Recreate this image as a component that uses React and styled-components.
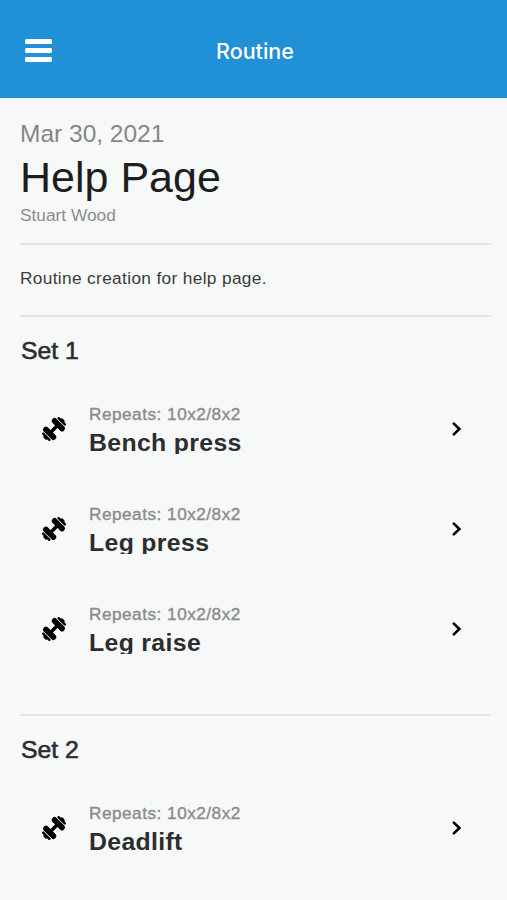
import React from 'react';
import styled, { createGlobalStyle } from 'styled-components';

const routine = {
  date: 'Mar 30, 2021',
  name: 'Help Page',
  author: 'Stuart Wood',
  description: 'Routine creation for help page.',
  sets: [
    {
      title: 'Set 1',
      exercises: [
        { name: 'Bench press', repeats: '10x2/8x2' },
        { name: 'Leg press', repeats: '10x2/8x2' },
        { name: 'Leg raise', repeats: '10x2/8x2' },
      ],
    },
    {
      title: 'Set 2',
      exercises: [{ name: 'Deadlift', repeats: '10x2/8x2' }],
    },
  ],
};

const DumbbellIcon = () => (
  <svg width='26' height='26' viewBox='-13.5 -13.5 27 27'>
    <g transform='rotate(-45)'>
      <rect x='-5' y='-1.8' width='10' height='3.6' />
      <rect x='-9.3' y='-8.4' width='5.9' height='16.8' rx='2.6' />
      <rect x='3.4' y='-8.4' width='5.9' height='16.8' rx='2.6' />
      <rect x='-12.6' y='-5.8' width='2.5' height='11.6' rx='1.2' />
      <rect x='10.1' y='-5.8' width='2.5' height='11.6' rx='1.2' />
      <rect x='-14' y='-2.4' width='2.6' height='4.8' rx='1' />
      <rect x='11.4' y='-2.4' width='2.6' height='4.8' rx='1' />
    </g>
  </svg>
);

const ChevronIcon = () => (
  <svg width='12' height='16' viewBox='0 0 12 16'>
    <path
      d='M2.8 2.6 L8.4 8 L2.8 13.4'
      fill='none'
      stroke='#000'
      strokeWidth='2.6'
      strokeLinecap='round'
    />
  </svg>
);

export default function App() {
  return (
    <>
      <GlobalStyle />
      <Screen>
        <Header>
          <MenuButton aria-label='Menu'>
            <span />
            <span />
            <span />
          </MenuButton>
          <HeaderTitle>Routine</HeaderTitle>
        </Header>

        <Content>
          <Intro>
            <RoutineDate>{routine.date}</RoutineDate>
            <RoutineName>{routine.name}</RoutineName>
            <Author>{routine.author}</Author>
          </Intro>
          <Description>{routine.description}</Description>

          {routine.sets.map(({ title, exercises }) => (
            <SetSection key={title}>
              <SetTitle>{title}</SetTitle>
              {exercises.map(({ name, repeats }) => (
                <ExerciseRow key={name}>
                  <DumbbellIcon />
                  <ExerciseInfo>
                    <Repeats>Repeats: {repeats}</Repeats>
                    <ExerciseName>{name}</ExerciseName>
                  </ExerciseInfo>
                  <ChevronIcon />
                </ExerciseRow>
              ))}
            </SetSection>
          ))}
        </Content>
      </Screen>
    </>
  );
}

const GlobalStyle = createGlobalStyle`
  * {
    box-sizing: border-box;
  }
  body {
    margin: 0;
    background-color: #f7f9f9;
  }
`;

const Screen = styled.div`
  height: 900px;
  overflow: hidden;
  background-color: #f7f9f9;
  font-family: "Liberation Sans", Arial, sans-serif;
  color: #2b2d31;
`;

const Header = styled.header`
  display: grid;
  grid-template-columns: 1fr auto 1fr;
  align-items: center;
  height: 98px;
  padding: 4px 22px 0 25px;
  background-color: #2090d7;
`;

const MenuButton = styled.button`
  display: flex;
  flex-direction: column;
  gap: 4px;
  width: 27px;
  padding: 0;
  margin-top: -2px;
  border: none;
  background: none;
  span {
    height: 5px;
    border-radius: 1.5px;
    background-color: white;
  }
`;

const HeaderTitle = styled.h1`
  margin: 0;
  font-family: Inter, "Liberation Sans", sans-serif;
  font-size: 21.5px;
  font-weight: 500;
  color: white;
`;

const Content = styled.main`
  padding: 0 16px 0 20px;
`;

const Intro = styled.section`
  height: 147px;
  padding-top: 22px;
  border-bottom: 2px solid #e3e5e5;
`;

const RoutineDate = styled.div`
  font-size: 24.5px;
  line-height: 28px;
  color: #858686;
`;

const RoutineName = styled.h2`
  margin: -1px 0 0;
  font-size: 43px;
  font-weight: 400;
  line-height: 60px;
  color: #1c1d1d;
`;

const Author = styled.div`
  font-size: 17.3px;
  line-height: 20px;
  margin-top: -2px;
  color: #8b8c8c;
`;

const Description = styled.p`
  display: flex;
  align-items: center;
  height: 72px;
  margin: 0;
  padding-bottom: 3px;
  border-bottom: 2px solid #e3e5e5;
  font-size: 17.3px;
  letter-spacing: 0.34px;
  color: #3a3b3d;
`;

const SetSection = styled.section`
  height: 399px;
  padding-top: 19px;
  border-bottom: 2px solid #e3e5e5;
`;

const SetTitle = styled.h3`
  margin: 0 0 14px 1px;
  font-size: 24.8px;
  font-weight: 400;
  line-height: 29px;
  -webkit-text-stroke: 0.6px currentColor;
`;

const ExerciseRow = styled.div`
  display: grid;
  grid-template-columns: 26px 1fr 12px;
  column-gap: 22px;
  align-items: center;
  height: 100px;
  padding: 0 28px 0 21px;
`;

const ExerciseInfo = styled.div`
  padding-bottom: 2px;
`;

const Repeats = styled.div`
  font-size: 17.2px;
  line-height: 22px;
  letter-spacing: 0.5px;
  color: #8b8c8c;
  -webkit-text-stroke: 0.4px currentColor;
`;

const ExerciseName = styled.div`
  height: 29px;
  overflow: hidden;
  font-size: 24.8px;
  font-weight: 700;
  line-height: 35px;
  letter-spacing: 0.35px;
`;
